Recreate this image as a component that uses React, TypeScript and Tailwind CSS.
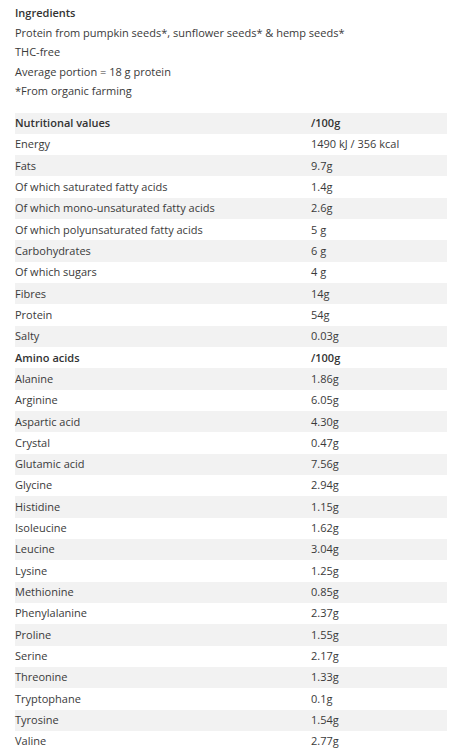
import React from "react";

const nutr: [string, string][] = [
  ["Energy", "1490 kJ / 356 kcal"],
  ["Fats", "9.7g"],
  ["Of which saturated fatty acids", "1.4g"],
  ["Of which mono-unsaturated fatty acids", "2.6g"],
  ["Of which polyunsaturated fatty acids", "5 g"],
  ["Carbohydrates", "6 g"],
  ["Of which sugars", "4 g"],
  ["Fibres", "14g"],
  ["Protein", "54g"],
  ["Salty", "0.03g"],
];
const amino: [string, string][] = [
  ["Alanine", "1.86g"],
  ["Arginine", "6.05g"],
  ["Aspartic acid", "4.30g"],
  ["Crystal", "0.47g"],
  ["Glutamic acid", "7.56g"],
  ["Glycine", "2.94g"],
  ["Histidine", "1.15g"],
  ["Isoleucine", "1.62g"],
  ["Leucine", "3.04g"],
  ["Lysine", "1.25g"],
  ["Methionine", "0.85g"],
  ["Phenylalanine", "2.37g"],
  ["Proline", "1.55g"],
  ["Serine", "2.17g"],
  ["Threonine", "1.33g"],
  ["Tryptophane", "0.1g"],
  ["Tyrosine", "1.54g"],
  ["Valine", "2.77g"],
];

type Row = { a: string; b: string; bold?: boolean };

export default function App() {
  const rows: Row[] = [
    { a: "Nutritional values", b: "/100g", bold: true },
    ...nutr.map(([a, b]) => ({ a, b })),
    { a: "Amino acids", b: "/100g", bold: true },
    ...amino.map(([a, b]) => ({ a, b })),
  ];
  return (
    <div
      className="bg-white text-[#3a3a3a] text-[11px] px-[15px] pt-[3px]"
      style={{ fontFamily: '"Open Sans", "Noto Sans", sans-serif' }}
    >
      <div className="leading-[19.5px]">
        <div className="font-semibold text-[#333]">Ingredients</div>
        <div>Protein from pumpkin seeds*, sunflower seeds* &amp; hemp seeds*</div>
        <div>THC-free</div>
        <div>Average portion = 18 g protein</div>
        <div>*From organic farming</div>
      </div>
      <div className="mt-[12px] w-[432px]">
        {rows.map((r, i) => (
          <div
            key={i}
            className={`flex h-[21.33px] items-center ${i % 2 === 0 ? "bg-[#f2f2f2]" : "bg-white"} ${r.bold ? "font-semibold text-[#333]" : ""}`}
          >
            <div className="w-[296px] shrink-0">{r.a}</div>
            <div>{r.b}</div>
          </div>
        ))}
      </div>
    </div>
  );
}
